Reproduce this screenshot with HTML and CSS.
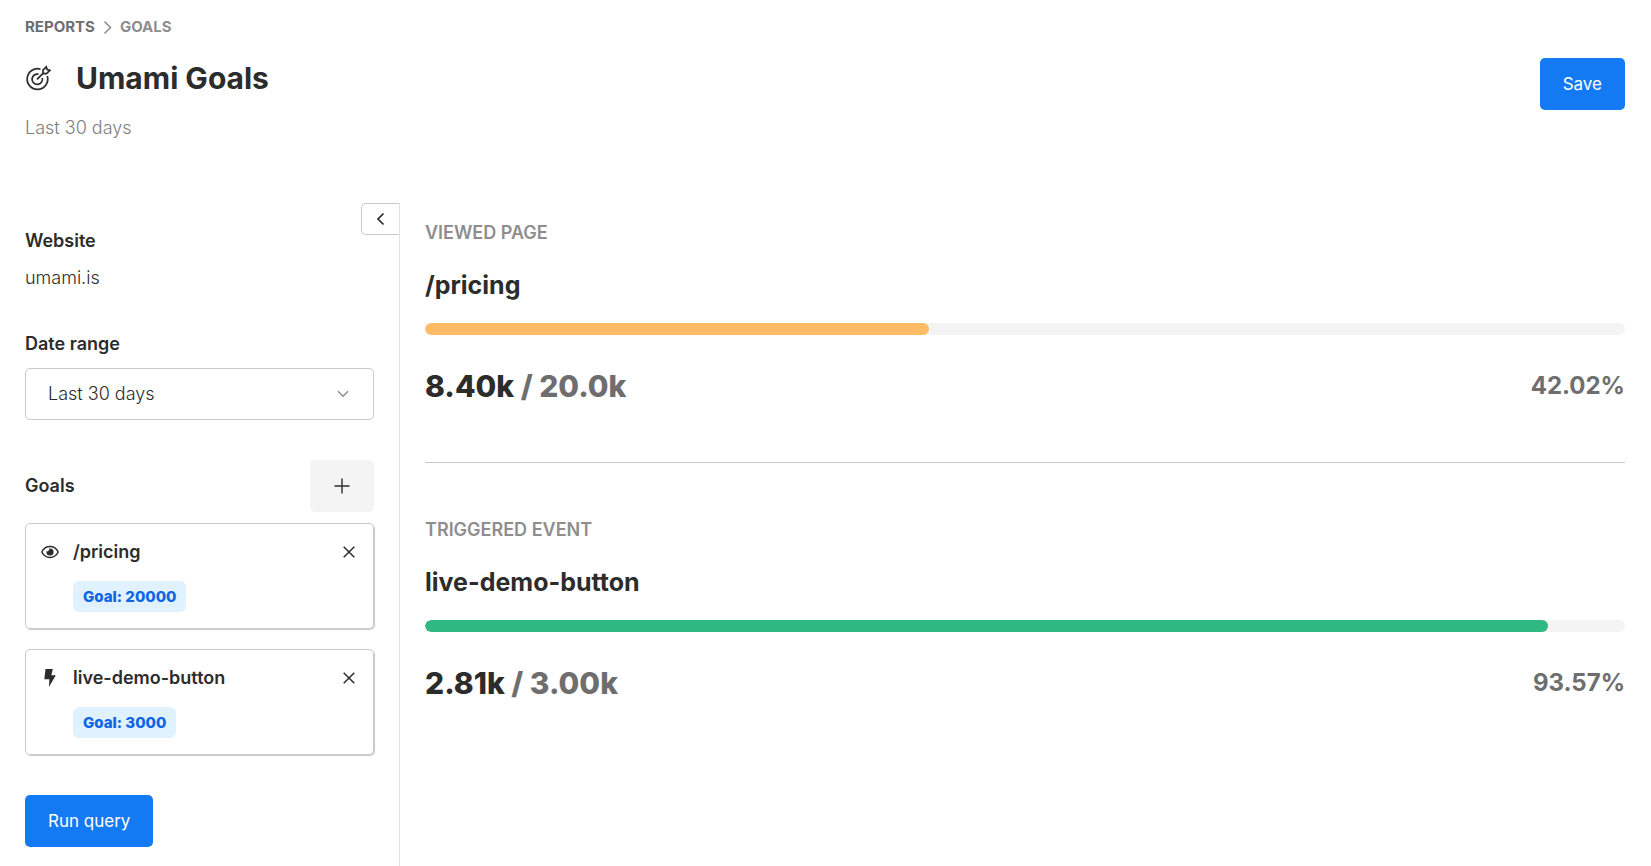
FILE: index.html
```html
<!DOCTYPE html>
<html lang="en">
<head>
<meta charset="utf-8">
<title>Umami Goals</title>
<link rel="stylesheet" href="styles.css">
</head>
<body>
<div class="page">
  <header class="header">
    <div class="heading">
      <nav class="breadcrumb" aria-label="Breadcrumb">
        <a href="#reports">Reports</a>
        <svg width="15" height="15" viewBox="0 0 15 15" aria-hidden="true"><path d="M4.500 1.500l6 6-6 6"/></svg>
        <span>Goals</span>
      </nav>
      <div class="title-row">
        <svg class="target" width="26" height="26" viewBox="0 0 26 26" aria-hidden="true">
          <path d="M15.500 4.200A10.300 10.300 0 1 0 22.300 11"/>
          <path d="M13.500 9.200A5.200 5.200 0 1 0 17.300 13"/>
          <path d="M12 14.400l7-7M18 8.400V5.200l3.300-3.300.8 2.700 2.800.8-3.400 3.300z"/>
        </svg>
        <h1>Umami Goals</h1>
      </div>
      <p class="period">Last 30 days</p>
    </div>
    <button class="button primary" type="button">Save</button>
  </header>

  <div class="body">
    <aside class="sidebar">
      <button class="collapse" type="button" aria-label="Collapse">
        <svg width="16" height="16" viewBox="0 0 16 16" aria-hidden="true"><path d="M10.500 2.500L5 8l5.500 5.500"/></svg>
      </button>
      <form class="form">
        <section class="field">
          <h2>Website</h2>
          <p>umami.is</p>
        </section>
        <section class="field">
          <label for="range">Date range</label>
          <div class="select">
            <select id="range"><option>Last 30 days</option></select>
            <svg width="12" height="8" viewBox="0 0 12 8" aria-hidden="true"><path d="M1 1.200l5 5 5-5"/></svg>
          </div>
        </section>
        <section class="field">
          <div class="field-head">
            <h2>Goals</h2>
            <button class="button add" type="button" aria-label="Add goal">
              <svg width="16" height="16" viewBox="0 0 16 16" aria-hidden="true"><path d="M8 .5v15M.5 8h15"/></svg>
            </button>
          </div>
          <ul class="goals">
            <li class="goal">
              <svg class="icon" width="18" height="18" viewBox="0 0 18 18" aria-hidden="true"><path class="line" d="M.8 9C2.600 5.400 5.600 3.600 9 3.600S15.400 5.400 17.200 9C15.400 12.600 12.400 14.400 9 14.400S2.600 12.600.8 9z"/><path d="M9 5.400A3.600 3.600 0 1 1 5.400 9l.1-.9a1.300 1.300 0 0 0 1.900-.3A1.300 1.300 0 0 0 7.900 5.600z"/></svg>
              <strong>/pricing</strong>
              <button class="remove" type="button" aria-label="Remove /pricing"><svg width="12" height="12" viewBox="0 0 12 12" aria-hidden="true"><path d="M.7.7l10.600 10.600M11.300.7L.7 11.300"/></svg></button>
              <span class="badge">Goal: 20000</span>
            </li>
            <li class="goal">
              <svg class="icon" width="18" height="18" viewBox="0 0 18 18" aria-hidden="true"><path d="M4.500 0h7.300l-1.500 6.200h4.500L7.900 18l.5-7.800H3.300z"/></svg>
              <strong>live-demo-button</strong>
              <button class="remove" type="button" aria-label="Remove live-demo-button"><svg width="12" height="12" viewBox="0 0 12 12" aria-hidden="true"><path d="M.7.7l10.600 10.600M11.300.7L.7 11.300"/></svg></button>
              <span class="badge">Goal: 3000</span>
            </li>
          </ul>
        </section>
        <button class="button primary" type="button">Run query</button>
      </form>
    </aside>

    <main class="results">
      <section class="result">
        <p class="type">Viewed page</p>
        <h2>/pricing</h2>
        <div class="track"><div class="fill orange" style="width: 42.02%"></div></div>
        <div class="numbers">
          <div class="count">8.40k <span>/ 20.0k</span></div>
          <div class="percent">42.02%</div>
        </div>
      </section>
      <section class="result">
        <p class="type">Triggered event</p>
        <h2>live-demo-button</h2>
        <div class="track"><div class="fill green" style="width: 93.57%"></div></div>
        <div class="numbers">
          <div class="count">2.81k <span>/ 3.00k</span></div>
          <div class="percent">93.57%</div>
        </div>
      </section>
    </main>
  </div>
</div>
</body>
</html>
```
FILE: styles.css
```css
* { box-sizing: border-box; }

body {
  margin: 0;
  background: #fff;
  color: #2c2c2c;
  font: 300 18px/26px Inter, sans-serif;
}

h1, h2, p, ul { margin: 0; padding: 0; }

button, select { font: inherit; color: inherit; cursor: pointer; }

svg { display: block; fill: none; stroke: currentColor; }

.page {
  display: flex;
  flex-direction: column;
  min-height: 100vh;
}

.header {
  display: flex;
  justify-content: space-between;
  align-items: flex-start;
  padding: 16px 26px 62px 25px;
}

.header .button { margin-top: 42px; }

.breadcrumb {
  display: flex;
  align-items: center;
  gap: 5px;
  color: #8e8e8e;
  font-size: 15px;
  font-weight: 700;
  line-height: 22px;
  text-transform: uppercase;
}

.breadcrumb a { color: #6e6e6e; text-decoration: none; }

.breadcrumb svg { stroke-width: 1.500; }

.title-row {
  display: flex;
  align-items: center;
  gap: 25px;
  margin-top: 18px;
}

.target { stroke-width: 1.700; }

.title-row h1 { font-size: 30px; font-weight: 700; line-height: 44px; }

.period { margin-top: 15px; color: #7e7e7e; }

.button {
  display: flex;
  align-items: center;
  justify-content: center;
  height: 52px;
  padding: 0 23px;
  border: 0;
  border-radius: 5px;
}

.primary { background: #147af3; color: #fff; font-size: 17px; font-weight: 400; }

.add { padding: 0 24px; background: #f4f4f4; }

.add svg { stroke-width: 1.400; }

.body { display: flex; flex: 1; }

.sidebar {
  position: relative;
  width: 400px;
  flex: none;
  padding: 25px 25px 20px;
  border-right: 1px solid #e1e1e1;
}

.collapse {
  position: absolute;
  top: 0;
  right: 0;
  display: flex;
  align-items: center;
  justify-content: center;
  width: 38px;
  height: 32px;
  padding: 0;
  border: 1px solid #c9c9c9;
  border-right: 0;
  border-radius: 5px 0 0 5px;
  background: #fff;
}

.collapse svg { stroke-width: 1.700; }

.form {
  display: flex;
  flex-direction: column;
  align-items: flex-start;
  gap: 40px;
}

.field {
  display: flex;
  flex-direction: column;
  gap: 11px;
  width: 100%;
}

.field h2, .field label { font-size: 18px; font-weight: 600; }

.field-head {
  display: flex;
  align-items: center;
  justify-content: space-between;
}

.select { position: relative; }

.select select {
  display: block;
  width: 100%;
  height: 52px;
  padding: 0 22px;
  border: 1px solid #c9c9c9;
  border-radius: 5px;
  background: #fff;
  appearance: none;
}

.select svg {
  position: absolute;
  top: 22px;
  right: 25px;
  color: #8e8e8e;
  stroke-width: 1.500;
  pointer-events: none;
}

.goals {
  display: flex;
  flex-direction: column;
  gap: 20px;
  list-style: none;
}

.goal {
  display: grid;
  grid-template-columns: 18px 1fr 20px;
  align-items: center;
  gap: 16px 14px;
  padding: 15px 14px 16px 15px;
  border: 1px solid #c9c9c9;
  border-radius: 5px;
  box-shadow: 1px 1px 1px #c9c9c9;
}

.goal strong { font-weight: 600; }

.icon { fill: currentColor; stroke: none; }

.icon .line { fill: none; stroke: currentColor; stroke-width: 1.500; }

.remove {
  display: flex;
  justify-content: center;
  padding: 0;
  border: 0;
  background: none;
}

.remove svg { stroke-width: 1.500; }

.badge {
  grid-column: 2;
  justify-self: start;
  padding: 0 10px;
  border-radius: 6px;
  background: #e0f1ff;
  color: #0c65e2;
  font-size: 15px;
  font-weight: 800;
  line-height: 31px;
}

.results { flex: 1; padding: 15px 26px 20px 25px; }

.result + .result {
  margin-top: 54px;
  padding-top: 52px;
  border-top: 1px solid #c9c9c9;
}

.type {
  color: #8e8e8e;
  font-weight: 600;
  line-height: 30px;
  text-transform: uppercase;
}

.result h2 { margin: 18px 0 19px; font-size: 25px; font-weight: 700; line-height: 38px; }

.track {
  height: 12px;
  overflow: hidden;
  border-radius: 6px;
  background: #f4f4f4;
}

.fill { height: 100%; border-radius: 6px; }

.orange { background: #ffbb66; }

.green { background: #30b883; }

.numbers {
  display: flex;
  align-items: center;
  justify-content: space-between;
  margin-top: 29px;
  color: #6e6e6e;
  font-weight: 700;
  line-height: 44px;
}

.count { color: #2c2c2c; font-size: 30px; font-weight: 800; }

.count span { color: #6e6e6e; }

.percent { font-size: 24px; }
```
